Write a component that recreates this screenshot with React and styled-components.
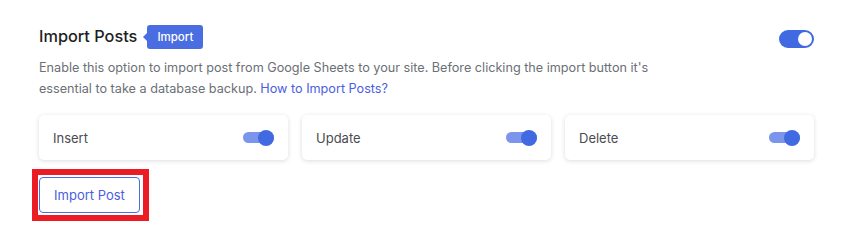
import React, {useState} from 'react';
import styled, {createGlobalStyle} from 'styled-components';

const GlobalStyle = createGlobalStyle`
  body {
    margin: 0;
    min-height: 100vh;
    background: #fff;
    font-family: Inter, "Noto Sans", sans-serif;
  }
`

const Section = styled.section`
  padding: 24px 39px 26px 39px;
`

const Header = styled.div`
  display: flex;
  align-items: center;
  justify-content: space-between;
  height: 25px;
`

const TitleGroup = styled.div`
  display: flex;
  align-items: center;
  gap: 10px;
`

const Title = styled.h2`
  margin: 0;
  font-size: 16.3px;
  font-weight: 500;
  color: #1d1f23;
  line-height: 25px;
`

const Badge = styled.span`
  position: relative;
  display: inline-flex;
  align-items: center;
  height: 24px;
  padding: 0 10px;
  background: #4a6de2;
  color: #fff;
  font-size: 11.5px;
  font-weight: 500;
  border-radius: 3px;
  &::before {
    content: '';
    position: absolute;
    left: -4px;
    top: 50%;
    transform: translateY(-50%);
    border-top: 4px solid transparent;
    border-bottom: 4px solid transparent;
    border-right: 4px solid #4a6de2;
  }
`

const Switch = styled.button`
  position: relative;
  width: 35px;
  height: 18px;
  padding: 0;
  border: none;
  border-radius: 9px;
  background: ${props => props.on ? '#4169e1' : '#c7cbd4'};
  cursor: pointer;
  margin-top: 4px;
  &::after {
    content: '';
    position: absolute;
    top: 2px;
    left: ${props => props.on ? '19px' : '2px'};
    width: 14px;
    height: 14px;
    border-radius: 50%;
    background: #fff;
  }
`

const Description = styled.p`
  margin: 8px 0 0 0;
  max-width: 640px;
  font-size: 12.65px;
  line-height: 21px;
  color: #6b6f76;
`

const Link = styled.a`
  color: #4a5ee2;
  text-decoration: none;
`

const Options = styled.div`
  display: grid;
  grid-template-columns: repeat(3, 1fr);
  gap: 14px;
  margin-top: 16px;
`

const Card = styled.div`
  display: flex;
  align-items: center;
  justify-content: space-between;
  height: 45px;
  padding: 0 14px;
  background: #fff;
  border-radius: 5px;
  box-shadow: 0 1px 4px rgba(30, 40, 70, 0.16);
`

const Label = styled.span`
  font-size: 13px;
  color: #4a4c50;
`

const MiniSwitch = styled.button`
  position: relative;
  width: 31px;
  height: 11px;
  padding: 0;
  border: none;
  border-radius: 6px;
  background: ${props => props.on ? '#7b94ec' : '#cfd3da'};
  cursor: pointer;
  &::after {
    content: '';
    position: absolute;
    top: 50%;
    left: ${props => props.on ? '15px' : '-2px'};
    transform: translateY(-50%);
    width: 16px;
    height: 16px;
    border-radius: 50%;
    background: ${props => props.on ? '#4169e1' : '#f1f2f4'};
  }
`

const ImportButton = styled.button`
  position: relative;
  margin-top: 17px;
  width: 101px;
  height: 36px;
  background: #fff;
  border: 1px solid #4a6de2;
  border-radius: 4px;
  color: #4a5ee2;
  font-family: Inter, "Noto Sans", sans-serif;
  font-size: 13px;
  cursor: pointer;
  /* red highlight frame drawn over the button */
  &::after {
    content: '';
    position: absolute;
    top: -9px;
    left: -8px;
    right: -10px;
    bottom: -9px;
    border: 6px solid #ec1c24;
    pointer-events: none;
  }
`

const App = () => {
    const [enabled, setEnabled] = useState(true)
    const [opts, setOpts] = useState({insert: true, update: true, delete: true})

    const toggle = key => setOpts({...opts, [key]: !opts[key]})

    return (
        <>
            <GlobalStyle/>
            <Section>
                <Header>
                    <TitleGroup>
                        <Title>Import Posts</Title>
                        <Badge>Import</Badge>
                    </TitleGroup>
                    <Switch on={enabled ? 1 : 0} onClick={() => setEnabled(!enabled)}/>
                </Header>
                <Description>
                    Enable this option to import post from Google Sheets to your site. Before clicking the import
                    button it's essential to take a database backup. <Link href="#">How to Import Posts?</Link>
                </Description>
                <Options>
                    <Card>
                        <Label>Insert</Label>
                        <MiniSwitch on={opts.insert ? 1 : 0} onClick={() => toggle('insert')}/>
                    </Card>
                    <Card>
                        <Label>Update</Label>
                        <MiniSwitch on={opts.update ? 1 : 0} onClick={() => toggle('update')}/>
                    </Card>
                    <Card>
                        <Label>Delete</Label>
                        <MiniSwitch on={opts.delete ? 1 : 0} onClick={() => toggle('delete')}/>
                    </Card>
                </Options>
                <ImportButton>Import Post</ImportButton>
            </Section>
        </>
    );
};

export default App;
